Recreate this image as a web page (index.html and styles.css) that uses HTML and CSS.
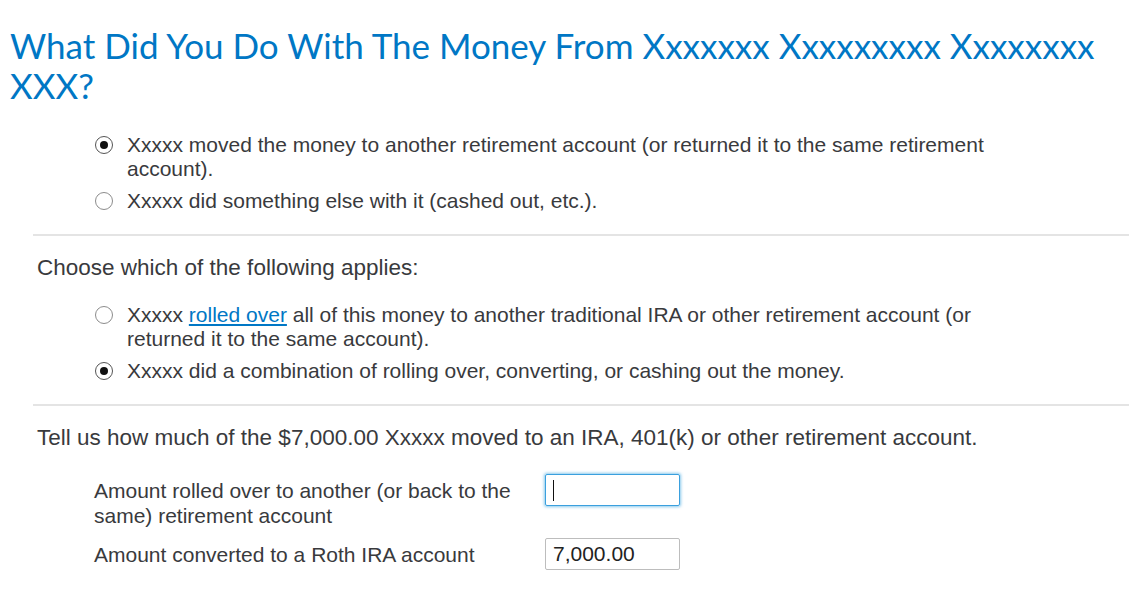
FILE: index.html
```html
<!DOCTYPE html>
<html>
<head>
<meta charset="utf-8">
<link rel="stylesheet" href="styles.css">
</head>
<body>
<div class="page">
  <h1 class="title">What Did You Do With The Money From Xxxxxxx Xxxxxxxxx Xxxxxxxx XXX?</h1>

  <ul class="radios first">
    <li class="opt"><span class="radio checked"></span><span class="opt-text">Xxxxx moved the money to another retirement account (or returned it to the same retirement account).</span></li>
    <li class="opt"><span class="radio"></span><span class="opt-text">Xxxxx did something else with it (cashed out, etc.).</span></li>
  </ul>

  <hr class="rule">

  <p class="prompt">Choose which of the following applies:</p>

  <ul class="radios second">
    <li class="opt"><span class="radio"></span><span class="opt-text">Xxxxx <a class="link" href="#">rolled over</a> all of this money to another traditional IRA or other retirement account (or returned it to the same account).</span></li>
    <li class="opt"><span class="radio checked"></span><span class="opt-text">Xxxxx did a combination of rolling over, converting, or cashing out the money.</span></li>
  </ul>

  <hr class="rule">

  <p class="prompt">Tell us how much of the $7,000.00 Xxxxx moved to an IRA, 401(k) or other retirement account.</p>

  <div class="fields">
    <div class="field field-top">
      <label class="field-label">Amount rolled over to another (or back to the same) retirement account</label>
      <div class="input focused"><span class="caret"></span></div>
    </div>
    <div class="field field-mid">
      <label class="field-label">Amount converted to a Roth IRA account</label>
      <div class="input">7,000.00</div>
    </div>
  </div>
</div>
</body>
</html>
```

FILE: styles.css
```css
* { box-sizing: border-box; }
html, body { margin: 0; padding: 0; background: #fff; }
body {
  font-family: "Liberation Sans", Arial, sans-serif;
  color: #393a3d;
}
.page {
  padding: 25px 0 0 0;
}
.title {
  margin: 0 0 0 10px;
  font-family: Lato, "Open Sans", sans-serif;
  font-weight: 400;
  font-size: 35px;
  line-height: 40px;
  color: #0077c5;
  width: 1110px;
}
.radios {
  list-style: none;
  margin: 0;
  padding: 0 0 0 95px;
}
.radios.first { margin-top: 28px; }
.radios.second { margin-top: 22px; }
.opt {
  display: flex;
  align-items: flex-start;
  font-size: 21px;
  line-height: 24px;
  margin-bottom: 8px;
  max-width: 912px;
}
.opt:last-child { margin-bottom: 0; }
.radio {
  flex: none;
  position: relative;
  width: 18px;
  height: 18px;
  margin-top: 3px;
  margin-right: 14px;
  border: 1px solid #8c8c8c;
  border-radius: 50%;
  background: #fff;
}
.radio.checked { border-color: #555; }
.radio.checked::after {
  content: "";
  position: absolute;
  left: 4px;
  top: 4px;
  width: 8px;
  height: 8px;
  border-radius: 50%;
  background: #111;
}
.link { color: #0077c5; text-decoration: underline; }
.rule {
  margin: 21px 0 0 33px;
  border: 0;
  border-top: 2px solid #e4e4e4;
  height: 0;
}
.prompt {
  margin: 19px 0 0 37px;
  font-size: 22.5px;
  line-height: 26px;
}
.fields {
  margin: 23px 0 0 94px;
}
.field {
  display: flex;
  align-items: flex-start;
}
.field-mid { align-items: center; margin-top: 10px; }
.field-label {
  width: 451px;
  padding-right: 11px;
  font-size: 21px;
  line-height: 25px;
}
.field-top .field-label { padding-top: 4px; }
.input {
  position: relative;
  width: 135px;
  height: 32px;
  border: 1px solid #bdbdbd;
  border-radius: 2px;
  font-size: 21px;
  line-height: 30px;
  padding-left: 7px;
  color: #222;
}
.input.focused {
  border: 1px solid #3aa0de;
  box-shadow: 0 0 3px 1px rgba(60, 165, 225, 0.6);
}
.caret {
  position: absolute;
  left: 7px;
  top: 5px;
  width: 1px;
  height: 21px;
  background: #111;
}
```
